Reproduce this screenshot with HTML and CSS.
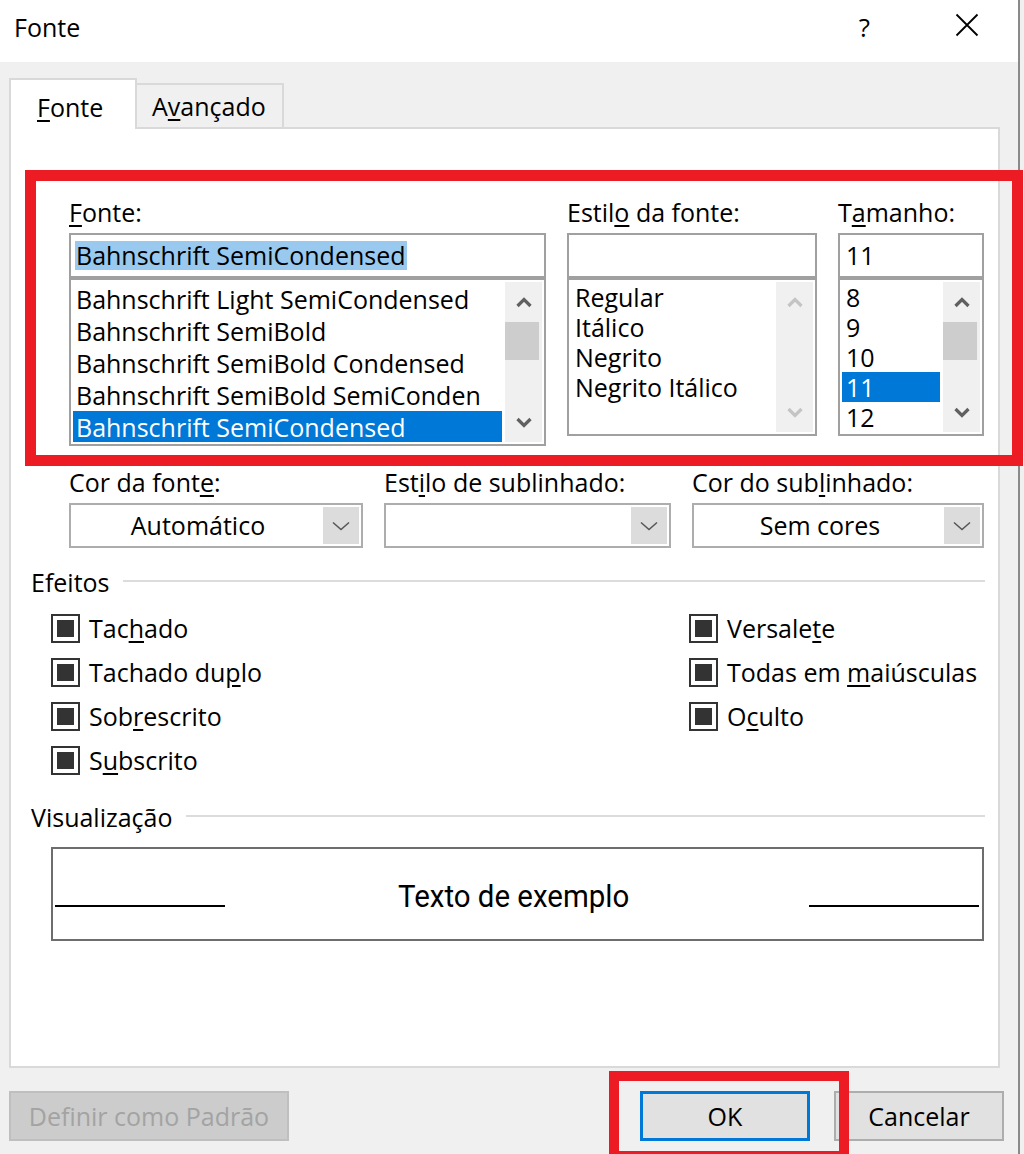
FILE: index.html
```html
<!DOCTYPE html>
<html lang="pt">
<head>
    <meta charset="UTF-8">
    <meta name="viewport" content="width=device-width, initial-scale=1.0">
    <title>Fonte</title>
    <link rel="stylesheet" href="styles.css">
</head>
<body>
    <div class="window">
        <div class="titlebar">
            <span class="title">Fonte</span>
            <span class="help">?</span>
            <svg class="close" width="24" height="24" viewBox="0 0 24 24"><path d="M1.5 1.5L22.5 22.5M22.5 1.5L1.5 22.5" stroke="#000" stroke-width="1.8" fill="none"/></svg>
        </div>

        <div class="tabs">
            <div class="tab active"><u>F</u>onte</div>
            <div class="tab plain">A<u>v</u>ançado</div>
        </div>

        <div class="panel">
            <div class="font-row">
                <div class="field">
                    <div class="label"><u>F</u>onte:</div>
                    <div class="input"><span class="hl">Bahnschrift SemiCondensed</span></div>
                    <div class="list tall">
                        <ul class="items">
                            <li>Bahnschrift Light SemiCondensed</li>
                            <li>Bahnschrift SemiBold</li>
                            <li>Bahnschrift SemiBold Condensed</li>
                            <li>Bahnschrift SemiBold SemiConden</li>
                            <li class="selected">Bahnschrift SemiCondensed</li>
                        </ul>
                        <div class="scroll">
                            <div class="sbtn"><svg width="16" height="11" viewBox="0 0 16 11"><polyline points="1.5,9 8,2.5 14.5,9" fill="none" stroke="#606060" stroke-width="3.2"/></svg></div>
                            <div class="thumb"></div>
                            <div class="fill"></div>
                            <div class="sbtn"><svg width="16" height="11" viewBox="0 0 16 11"><polyline points="1.5,2 8,8.5 14.5,2" fill="none" stroke="#606060" stroke-width="3.2"/></svg></div>
                        </div>
                    </div>
                </div>
                <div class="field">
                    <div class="label">Estil<u>o</u> da fonte:</div>
                    <div class="input"></div>
                    <div class="list">
                        <ul class="items">
                            <li>Regular</li>
                            <li>Itálico</li>
                            <li>Negrito</li>
                            <li>Negrito Itálico</li>
                        </ul>
                        <div class="scroll">
                            <div class="sbtn"><svg width="16" height="11" viewBox="0 0 16 11"><polyline points="1.5,9 8,2.5 14.5,9" fill="none" stroke="#c4c4c4" stroke-width="3.2"/></svg></div>
                            <div class="fill"></div>
                            <div class="sbtn"><svg width="16" height="11" viewBox="0 0 16 11"><polyline points="1.5,2 8,8.5 14.5,2" fill="none" stroke="#c4c4c4" stroke-width="3.2"/></svg></div>
                        </div>
                    </div>
                </div>
                <div class="field">
                    <div class="label">T<u>a</u>manho:</div>
                    <div class="input"><span>11</span></div>
                    <div class="list">
                        <ul class="items">
                            <li>8</li>
                            <li>9</li>
                            <li>10</li>
                            <li class="selected">11</li>
                            <li>12</li>
                        </ul>
                        <div class="scroll">
                            <div class="sbtn"><svg width="16" height="11" viewBox="0 0 16 11"><polyline points="1.5,9 8,2.5 14.5,9" fill="none" stroke="#606060" stroke-width="3.2"/></svg></div>
                            <div class="thumb"></div>
                            <div class="fill"></div>
                            <div class="sbtn"><svg width="16" height="11" viewBox="0 0 16 11"><polyline points="1.5,2 8,8.5 14.5,2" fill="none" stroke="#606060" stroke-width="3.2"/></svg></div>
                        </div>
                    </div>
                </div>
            </div>

            <div class="drop-row">
                <div class="field">
                    <div class="label">Cor da font<u>e</u>:</div>
                    <div class="select">
                        <span class="value">Automático</span>
                        <span class="arrow"><svg width="18" height="10" viewBox="0 0 18 10"><polyline points="1,1.5 9,8.5 17,1.5" fill="none" stroke="#555" stroke-width="1.5"/></svg></span>
                    </div>
                </div>
                <div class="field">
                    <div class="label">Est<u>i</u>lo de sublinhado:</div>
                    <div class="select">
                        <span class="value"></span>
                        <span class="arrow"><svg width="18" height="10" viewBox="0 0 18 10"><polyline points="1,1.5 9,8.5 17,1.5" fill="none" stroke="#555" stroke-width="1.5"/></svg></span>
                    </div>
                </div>
                <div class="field">
                    <div class="label">Cor do sub<u>l</u>inhado:</div>
                    <div class="select">
                        <span class="value">Sem cores</span>
                        <span class="arrow"><svg width="18" height="10" viewBox="0 0 18 10"><polyline points="1,1.5 9,8.5 17,1.5" fill="none" stroke="#555" stroke-width="1.5"/></svg></span>
                    </div>
                </div>
            </div>

            <div class="group">Efeitos</div>
            <div class="effects">
                <div class="col first">
                    <div class="check"><span class="box"></span><span>Tac<u>h</u>ado</span></div>
                    <div class="check"><span class="box"></span><span>Tachado du<u>p</u>lo</span></div>
                    <div class="check"><span class="box"></span><span>Sob<u>r</u>escrito</span></div>
                    <div class="check"><span class="box"></span><span>S<u>u</u>bscrito</span></div>
                </div>
                <div class="col">
                    <div class="check"><span class="box"></span><span>Versale<u>t</u>e</span></div>
                    <div class="check"><span class="box"></span><span>Todas em <u>m</u>aiúsculas</span></div>
                    <div class="check"><span class="box"></span><span>O<u>c</u>ulto</span></div>
                </div>
            </div>

            <div class="group second">Visualização</div>
            <div class="preview">
                <div class="rule"></div>
                <span class="sample">Texto de exemplo</span>
                <div class="rule"></div>
            </div>
        </div>

        <div class="buttons">
            <div class="btn disabled">Definir como Padrão</div>
            <div class="btn default">OK</div>
            <div class="btn cancel">Cancelar</div>
        </div>
    </div>

    <div class="mark mark-fonts"></div>
    <div class="mark mark-ok"></div>
</body>
</html>
```

FILE: styles.css
```css
html, body {
    margin: 0;
    height: 100%;
    overflow: hidden;
}
body {
    font-family: "Open Sans", "Noto Sans", sans-serif;
    font-size: 25px;
    color: #000;
    background: #f0f0f0;
}
u {
    text-decoration: underline;
    text-decoration-thickness: 2px;
    text-underline-offset: 3px;
}
.window {
    width: 1018px;
    height: 1154px;
    background: #f0f0f0;
    border-right: 2px solid #8a8a8a;
}

/* title bar */
.titlebar {
    height: 62px;
    background: #fff;
    display: flex;
    align-items: flex-start;
    padding: 12px 39px 0 14px;
    box-sizing: border-box;
    line-height: 30px;
}
.title { flex: 1; }
.help { margin-right: 85px; font-size: 26px; }
.close { margin-top: 1px; }

/* tabs */
.tabs {
    display: flex;
    align-items: flex-end;
    margin: 16px 0 -2px 9px;
    position: relative;
    z-index: 1;
}
.tab {
    box-sizing: border-box;
    border: 2px solid #d9d9d9;
    border-bottom: 0;
    line-height: 30px;
}
.tab.active {
    width: 128px;
    height: 51px;
    background: #fff;
    padding: 12px 0 0 26px;
}
.tab.plain {
    width: 147px;
    height: 44px;
    margin-bottom: 2px;
    border-left: 0;
    padding: 6px 0 0 15px;
}

/* panel */
.panel {
    margin-left: 9px;
    width: 991px;
    height: 941px;
    box-sizing: border-box;
    background: #fff;
    border: 2px solid #d9d9d9;
    padding: 68px 14px 0 20px;
}
.label {
    height: 30px;
    line-height: 30px;
    margin-bottom: 6px;
    white-space: nowrap;
}
.font-row {
    display: grid;
    grid-template-columns: 477px 250px 146px;
    column-gap: 21px;
    align-items: start;
    margin-left: 38px;
}
.input {
    height: 45px;
    box-sizing: border-box;
    border: 2px solid #a0a0a0;
    padding-left: 4px;
    display: flex;
    align-items: center;
}
.input span {
    line-height: 29px;
    padding: 0 2px;
}
.input .hl {
    background: #99c9ef;
    padding: 0 1px 0 1px;
}
.list {
    height: 158px;
    box-sizing: border-box;
    border: 2px solid #a0a0a0;
    padding: 2px;
    display: flex;
}
.list.tall { height: 168px; }
.items {
    flex: 1;
    margin: 0 3px 0 0;
    padding: 0;
    list-style: none;
    overflow: hidden;
}
.items li {
    height: 30px;
    line-height: 30px;
    padding-left: 4px;
    white-space: nowrap;
}
.tall .items { padding-top: 1px; }
.tall .items li { height: 32px; line-height: 32px; padding-left: 3px; }
.items li.selected { background: #0078d7; color: #fff; }
.scroll {
    width: 37px;
    background: #f0f0f0;
    display: flex;
    flex-direction: column;
}
.sbtn {
    height: 40px;
    display: flex;
    align-items: center;
    justify-content: center;
}
.thumb {
    height: 38px;
    margin-right: 3px;
    background: #cdcdcd;
}
.fill { flex: 1; }

/* dropdowns */
.drop-row {
    display: grid;
    grid-template-columns: 294px 287px 292px;
    column-gap: 21px;
    margin: 21px 0 0 38px;
}
.select {
    height: 45px;
    box-sizing: border-box;
    border: 2px solid #adadad;
    padding: 2px;
    display: flex;
}
.select .value {
    flex: 1;
    text-align: center;
    line-height: 37px;
}
.select .arrow {
    width: 36px;
    background: #dcdcdc;
    display: flex;
    align-items: center;
    justify-content: center;
}

/* group titles */
.group {
    display: flex;
    align-items: center;
    margin-top: 19px;
    line-height: 30px;
}
.group::after {
    content: "";
    flex: 1;
    height: 2px;
    margin: -3px -1px 0 13px;
    background: #dcdcdc;
}
.group.second { margin-top: 20px; }

/* effects */
.effects {
    display: flex;
    margin: 9px 0 0 20px;
}
.col { display: flex; flex-direction: column; }
.col.first { width: 638px; }
.check {
    height: 44px;
    display: flex;
    align-items: center;
    white-space: nowrap;
}
.box {
    width: 29px;
    height: 29px;
    box-sizing: border-box;
    border: 2px solid #333;
    margin-right: 9px;
    display: flex;
    align-items: center;
    justify-content: center;
    background: #fff;
}
.box::after {
    content: "";
    width: 17px;
    height: 17px;
    background: #333;
}

/* preview */
.preview {
    margin: 15px 0 0 20px;
    height: 94px;
    box-sizing: border-box;
    border: 2px solid #6d6d6d;
    padding: 31px 3px 0 2px;
    display: flex;
    align-items: baseline;
    justify-content: space-between;
}
.rule {
    width: 170px;
    height: 2px;
    background: #000;
}
.sample {
    display: inline-block;
    font-family: Roboto, "Liberation Sans", sans-serif;
    font-size: 32px;
    font-weight: 400;
    line-height: 32px;
    transform: scaleX(0.92);
    margin-left: -6px;
}

/* buttons */
.buttons {
    display: flex;
    margin-top: 23px;
    padding: 0 14px 0 9px;
}
.btn {
    height: 50px;
    box-sizing: border-box;
    background: #e1e1e1;
    border: 2px solid #adadad;
    display: flex;
    align-items: center;
    justify-content: center;
}
.btn.disabled {
    width: 280px;
    background: #cccccc;
    border-color: #bfbfbf;
    color: #a3a3a3;
}
.btn.default {
    width: 170px;
    margin-left: auto;
    border: 3px solid #0078d7;
}
.btn.cancel {
    width: 170px;
    margin-left: 24px;
}

/* red annotation frames */
.mark {
    position: absolute;
    box-sizing: border-box;
    border: 11px solid #ed1c24;
}
.mark-fonts {
    left: 25px;
    top: 170px;
    width: 998px;
    height: 296px;
}
.mark-ok {
    left: 609px;
    top: 1071px;
    width: 240px;
    height: 90px;
    border-width: 10px;
}
```
